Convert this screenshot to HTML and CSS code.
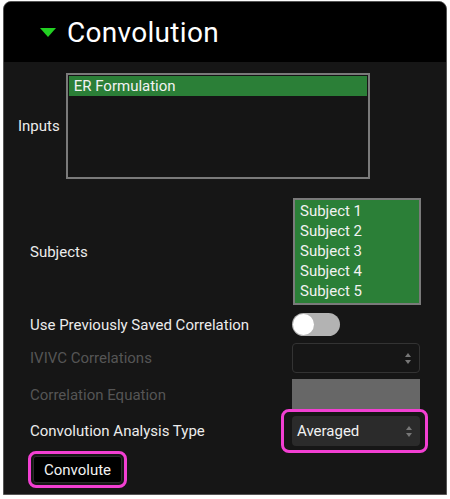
FILE: index.html
```html
<!DOCTYPE html>
<html lang="en">
<head>
  <meta charset="UTF-8">
  <title>Convolution</title>
  <link rel="stylesheet" href="styles.css">
</head>
<body>

  <div class="panel">
    <header class="panel-head">
      <span class="caret"></span>
      <h1>Convolution</h1>
    </header>

    <div class="panel-body">

      <div class="inputs-row">
        <div class="label">Inputs</div>
        <div class="listbox inputs-list">
          <div class="opt selected">ER Formulation</div>
        </div>
      </div>

      <div class="row subjects-row">
        <div class="label">Subjects</div>
        <div class="listbox subjects-list">
          <div class="opt selected">Subject 1</div>
          <div class="opt selected">Subject 2</div>
          <div class="opt selected">Subject 3</div>
          <div class="opt selected">Subject 4</div>
          <div class="opt selected">Subject 5</div>
        </div>
      </div>

      <div class="row toggle-row">
        <div class="label">Use Previously Saved Correlation</div>
        <div class="control"><span class="toggle"><span class="knob"></span></span></div>
      </div>

      <div class="row select-row">
        <div class="label disabled">IVIVC Correlations</div>
        <div class="select empty"><span></span><span class="arrows"></span></div>
      </div>

      <div class="row eq-row">
        <div class="label disabled">Correlation Equation</div>
        <div class="eq-box"></div>
      </div>

      <div class="row type-row">
        <div class="label">Convolution Analysis Type</div>
        <div class="select filled highlight"><span>Averaged</span><span class="arrows"></span></div>
      </div>

      <button class="run-btn">Convolute</button>

    </div>
  </div>

</body>
</html>
```

FILE: styles.css
```css
* {
  margin: 0;
  padding: 0;
  box-sizing: border-box;
  font-family: Roboto, 'Liberation Sans', sans-serif;
}

body {
  background: #fff;
  width: 450px;
  height: 499px;
  overflow: hidden;
}

.panel {
  margin: 1px 0 0 3px;
  width: 444px;
  height: 494px;
  border: 1px solid #555;
  border-radius: 8px 8px 0 0;
  overflow: hidden;
  background: #161616;
}

.panel-head {
  height: 60px;
  background: #000;
  display: flex;
  align-items: center;
  padding-left: 36px;
  gap: 11px;
}

.caret {
  width: 0;
  height: 0;
  border-left: 8px solid transparent;
  border-right: 8px solid transparent;
  border-top: 9px solid #22d022;
  margin-top: 1px;
}

.panel-head h1 {
  font-size: 28px;
  font-weight: 400;
  color: #fff;
  letter-spacing: 0.3px;
}

.panel-body {
  padding: 11px 26px 0 14px;
}

.label {
  color: #ececec;
  font-size: 15px;
}

.label.disabled {
  color: #555;
}

.inputs-row {
  display: flex;
  align-items: center;
  gap: 6px;
}

.listbox {
  border: 2px solid #7a7a7a;
  background: #151515;
  padding: 1px;
}

.inputs-list {
  width: 304px;
  height: 106px;
}

.opt {
  color: #f2f2f2;
  font-size: 15px;
  height: 20px;
  line-height: 20px;
  padding-left: 5px;
}

.opt.selected {
  background: #2b7f37;
}

.row {
  display: flex;
  align-items: center;
  justify-content: space-between;
  padding-left: 12px;
}

.subjects-row {
  margin-top: 19px;
}

.subjects-list {
  width: 128px;
  height: 107px;
  margin-right: -1px;
  background: #2b7f37;
}

.subjects-list .opt {
  padding-left: 4px;
}

.toggle-row {
  margin-top: 8px;
}

.control {
  width: 128px;
}

.toggle {
  display: flex;
  align-items: center;
  width: 48px;
  height: 23px;
  border-radius: 12px;
  background: #b3b3b3;
  padding-left: 1px;
}

.knob {
  width: 21px;
  height: 21px;
  border-radius: 50%;
  background: #fff;
}

.select {
  width: 128px;
  height: 30px;
  border-radius: 4px;
  display: flex;
  align-items: center;
  justify-content: space-between;
  padding: 0 8px 0 5px;
  color: #f2f2f2;
  font-size: 15px;
}

.select.empty {
  border: 1px solid #333;
}

.select.filled {
  background: #2b2b2b;
}

.select-row {
  margin-top: 7px;
}

.arrows {
  position: relative;
  width: 6px;
  height: 11px;
}

.arrows::before,
.arrows::after {
  content: "";
  position: absolute;
  left: 0;
  border-left: 3px solid transparent;
  border-right: 3px solid transparent;
}

.arrows::before {
  top: 0;
  border-bottom: 4px solid #777;
}

.arrows::after {
  bottom: 0;
  border-top: 4px solid #777;
}

.eq-row {
  margin-top: 6px;
}

.eq-box {
  width: 128px;
  height: 32px;
  background: #676767;
}

.type-row {
  margin-top: 5px;
}

.highlight {
  position: relative;
}

.highlight::after {
  content: "";
  position: absolute;
  top: -7px;
  bottom: -7px;
  left: -11px;
  right: -8px;
  border: 3px solid #f23fd2;
  border-radius: 8px;
}

.run-btn {
  margin: 10px 0 0 15px;
  width: 89px;
  height: 27px;
  background: #000;
  color: #f2f2f2;
  font-size: 15px;
  border: 1px solid #2a2a2a;
  border-radius: 3px;
  outline: 3px solid #f23fd2;
  outline-offset: 2px;
}
```
